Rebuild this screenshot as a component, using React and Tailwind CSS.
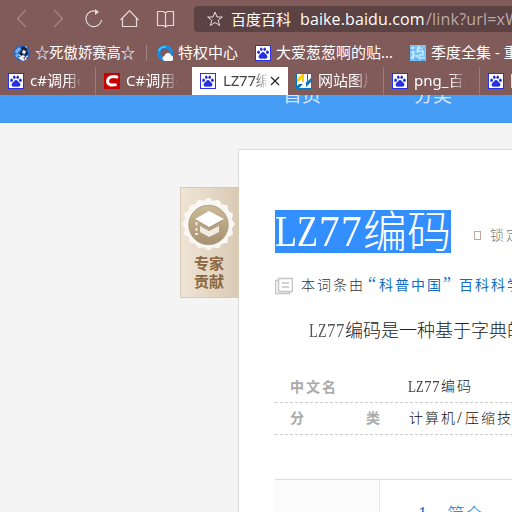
import React from "react";

const PawIcon = () => (
  <svg className="block size-4 shrink-0" viewBox="0 0 16 16">
    <rect x="0.5" y="0.5" width="15" height="15" fill="#fff" stroke="#2932e1" />
    <g fill="#2932e1">
      <ellipse cx="3.600" cy="7.200" rx="1.400" ry="1.700" />
      <ellipse cx="6.300" cy="4.200" rx="1.300" ry="1.800" />
      <ellipse cx="9.700" cy="4.200" rx="1.300" ry="1.800" />
      <ellipse cx="12.400" cy="7.200" rx="1.400" ry="1.700" />
      <path d="M8 7c-1.500 0-2 1.600-3.200 2.600-2.200 1.800-1.200 4.200.8 4.200.9 0 1.500-.4 2.400-.4s1.500.4 2.400.4c2 0 3-2.400.8-4.200C10 8.600 9.500 7 8 7z" />
    </g>
  </svg>
);

const CIcon = () => (
  <svg className="block size-4 shrink-0" viewBox="0 0 16 16">
    <path fill="#c90000" d="M0 0h16v16H0z" />
    <path d="M14 4.400C9 2.700 4 3.600 3.600 8c-.3 4.200 4.200 4.600 9 3.600" fill="none" stroke="#fff" strokeWidth="3" />
  </svg>
);

const SiteIcon = () => (
  <svg className="block size-4 shrink-0" viewBox="0 0 16 16">
    <rect x="0.500" y="0.500" width="15" height="15" fill="#fff" stroke="#0878bd" />
    <path fill="#fc0" d="M1 6l5-5h2v8H6V5L1 10z" />
    <path fill="#0878bd" d="M11 1h1v7l3-3v4l-5 5V9h1zM1 13l2-2h4l-4 4H1z" />
  </svg>
);

const AvatarIcon = () => (
  <svg className="block size-4 shrink-0" viewBox="0 0 16 16">
    <circle cx="8" cy="8" r="8" fill="#2368c4" />
    <path fill="#79b8f4" d="M1 6l4-4 2 2-5 5zM1 10l5-2-3 5z" />
    <path fill="#18213e" d="M7 3c2-3 6-1 6 2l1 4-3 2-1-3-3 4-2-3 3-4z" />
    <path fill="#f8f5f5" d="M9 5l3 1-1 3-3-1zM4 13l5-3 4 4-4 2zM11 1l2 1-1 1z" />
    <path stroke="#fff" d="M5 10l2 1M12 12l2-1" />
    <path fill="#a63c50" d="M9 13l2-1v3z" />
  </svg>
);

const CloudIcon = () => (
  <svg className="block size-4 shrink-0" viewBox="0 0 16 16">
    <circle cx="8" cy="8" r="6.300" fill="none" stroke="#168be8" strokeWidth="3.400" />
    <path d="M2 6a6.300 6.300 0 0 1 7-4" fill="none" stroke="#38c6f5" strokeWidth="2" />
    <path fill="#fff" d="M8 16a2.700 2.700 0 0 1-.5-5.300 3.500 3.500 0 0 1 6.700-.3C17 11 17 16 14 16z" />
  </svg>
);

const ReelIcon = () => (
  <svg className="block size-4 shrink-0" viewBox="0 0 16 16">
    <path fill="#79c4fa" d="M0 0h16v16H0z" />
    <path d="M1 3h3M1 7h4M3 2v12M1 13l4-3M7 3h7M9 1L7 7M8 6h5v4H9v3h6M6 12l2-5" fill="none" stroke="#d9f4ff" strokeWidth="1.200" />
    <path d="M0 5h5M6 9h3M12 2l3 3M11 15h4M5 14l3 1" fill="none" stroke="#4f9fe0" />
  </svg>
);

function NavIcons() {
  return (
    <svg className="block h-[38px] w-[194px] shrink-0" viewBox="0 0 194 38" fill="none" stroke="#e4dada" strokeWidth="1.200">
      <path d="M26 10l-8.500 8.500L26 27M54 10l8.500 8.500L54 27" stroke="#a58989" />
      <path d="M97 11.500A7.900 7.900 0 1 0 101.600 20" />
      <path d="M95 9l4 3-4 3z" fill="#e4dada" stroke="none" />
      <path d="M120.500 20l9-9.500 9 9.500M122.500 18v8.500h14V18" />
      <path d="M165.500 12.500v14M157.500 11.500h6l2 1.500 2-1.500h6v14h-6l-2 1.500-2-1.500h-6z" />
    </svg>
  );
}

function ExpertBadge() {
  const teeth = Array.from({ length: 32 }, (_, i) => {
    const r = i % 2 ? 23.800 : 26.600;
    const a = (i * Math.PI) / 16;
    return `${28.500 + r * Math.sin(a)},${37 - r * Math.cos(a)}`;
  }).join(" ");
  return (
    <div className="mt-16 flex h-[111px] w-[59px] flex-col items-start border border-r-0 border-[#d9c9b2] bg-linear-to-r from-[#efe5d6] to-[#d9cab4]">
      <svg className="-mt-px -ml-px block h-[67px] w-[57px] shrink-0" viewBox="0 0 57 67">
        <defs>
          <linearGradient id="medal" x2="0" y2="1">
            <stop stopColor="#cdbb98" />
            <stop offset="1" stopColor="#a59070" />
          </linearGradient>
        </defs>
        <polygon points={teeth} fill="#f9f7f4" />
        <circle cx="28.500" cy="38" r="19.700" fill="url(#medal)" stroke="#b3a187" />
        <path d="M20 39v6l9 5 10-5v-6l-10 5z" fill="#f1ece5" />
        <path d="M15 32l14-8 15 8-15 8z" fill="#fff" />
        <path d="M16.500 35v3.500M16.500 41v3M15 47h3" fill="none" stroke="#eee6db" strokeWidth="2" />
        <path d="M15.500 33l13.500 8 14-8" fill="none" stroke="#aa967c" />
      </svg>
      <div className="ml-[13px] text-[15px] leading-[18px] font-bold text-[#8b6841]">
        <div>专家</div>
        <div>贡献</div>
      </div>
    </div>
  );
}

const Sep = ({ className = "" }) => <div className={`w-px bg-[#a08282] ${className}`} />;

function Tab({ icon, label, active, divider }) {
  return (
    <div className={`flex h-7 w-24 shrink-0 items-center pl-2 ${active ? "bg-white text-[#444]" : "text-white"} ${divider ? "border-r border-[#9b7c7c]" : ""}`}>
      {icon}
      <div className={`-mt-0.5 shrink-0 overflow-hidden text-[15px] whitespace-nowrap [mask-image:linear-gradient(to_right,#000_70%,transparent)] ${active ? "ml-[7px] w-[45px] tracking-[-0.2px]" : "ml-[6px] w-[52px]"}`}>{label}</div>
      {active && (
        <svg className="ml-[2px] block size-[10px]" viewBox="0 0 10 10" stroke="#222" strokeWidth="1.200">
          <path d="M1 1l8 8M9 1L1 9" />
        </svg>
      )}
    </div>
  );
}

// Half-width serif capitals: every glyph takes half an em.
const Code = () => (
  <span className="inline-flex font-['Liberation_Serif',serif] tracking-normal">
    <span className="inline-block w-[0.5em] origin-left scale-x-[0.82]">L</span>
    <span className="inline-block w-[0.5em] origin-left scale-x-[0.78]">Z</span>
    <span className="inline-block w-[0.5em] origin-left scale-x-[0.94]">7</span>
    <span className="inline-block w-[0.5em] origin-left scale-x-[0.94]">7</span>
  </span>
);

export default function App() {
  return (
    <div className="flex h-[512px] w-[512px] flex-col overflow-hidden bg-[#f4f4f4] font-['Noto_Sans','Noto_Sans_CJK_SC',sans-serif]">
      <header className="h-[95px] shrink-0 overflow-hidden bg-[#815a5a] text-[15px] whitespace-nowrap text-white">
        <div className="flex h-[38px] items-center">
          <NavIcons />
          <div className="flex h-[26px] w-[318px] shrink-0 items-center overflow-hidden rounded-l bg-[#5c4242] pl-[13px]">
            <svg className="block size-4 shrink-0" viewBox="0 0 16 16" fill="none" stroke="#e8dcdc">
              <path d="M8 1l2 5h5.300l-4.200 3.400 1.600 5.200L8 11.500l-4.700 3.100 1.600-5.200L.7 6H6z" />
            </svg>
            <span className="ml-2 w-[69px] shrink-0">百度百科</span>
            <span className="w-[126px] shrink-0 font-['Open_Sans',sans-serif] text-[16px] tracking-[0.12px]">baike.baidu.com</span>
            <span className="font-['Open_Sans',sans-serif] text-[16px] tracking-[0.2px] text-[#bca9a9]">/link?url=xW</span>
          </div>
        </div>
        <div className="flex h-[29px] items-center pl-[14px]">
          <AvatarIcon />
          <span className="ml-[5px] w-[111px] shrink-0 text-[14.300px]">☆死傲娇赛高☆</span>
          <Sep className="h-4 shrink-0" />
          <div className="ml-[10px] shrink-0"><CloudIcon /></div>
          <span className="ml-[5px] w-[77px] shrink-0">特权中心</span>
          <PawIcon />
          <span className="ml-[5px] w-[134px] shrink-0">大爱葱葱啊的贴...</span>
          <ReelIcon />
          <span className="ml-[5px]">季度全集 - 重</span>
        </div>
        <div className="flex h-7">
          <Tab icon={<PawIcon />} label="c#调用c" divider />
          <Tab icon={<CIcon />} label="C#调用c" />
          <Tab icon={<PawIcon />} label="LZ77编码" active />
          <Tab icon={<SiteIcon />} label="网站图片" divider />
          <Tab icon={<PawIcon />} label="png_百度" divider />
          <Tab icon={<PawIcon />} label="图片" />
        </div>
      </header>

      <nav className="flex h-7 shrink-0 overflow-hidden border-b border-[#3d92ec] bg-[#459df5] pl-[283px] text-[19px] leading-[20px] text-[#d1e6fd]">
        <span className="-mt-[10px] w-[131px]">首页</span>
        <span className="-mt-[10px]">分类</span>
      </nav>

      <main className="flex flex-1 pl-[180px]">
        <aside className="relative z-10 w-[58px] shrink-0">
          <ExpertBadge />
        </aside>
        <article className="mt-[26px] w-[280px] shrink-0 border-t border-l border-[#dedede] bg-white pl-9 whitespace-nowrap">
          <div className="mt-[60px] flex h-[43px] items-center">
            <h1 className="flex h-[43px] w-[176px] shrink-0 items-center bg-[#338fff] text-[44px] leading-[43px] font-light text-white">
              <Code /><span>编码</span>
            </h1>
            <span className="mt-2 ml-[23px] h-[9px] w-[7px] shrink-0 border border-[#c5a5a0]" />
            <span className="mt-1.5 ml-[9px] text-[14px] font-light tracking-[2px] text-[#777]">锁定</span>
          </div>

          <div className="mt-[22px] flex h-5 items-center text-[14px] font-light tracking-[2px] text-[#333]">
            <svg className="mt-0.5 block h-[18px] w-[18px] shrink-0" viewBox="0 0 18 18" fill="none" stroke="#c4c4c4">
              <path d="M3.500 1.500h14v13h-14zM3.500 3.500h-3v13h14v-2M7 6h7M7 10h7" strokeWidth="1.500" />
            </svg>
            <span className="-mt-0.5 ml-[8px] w-[62px] shrink-0">本词条由</span>
            <span className="-mt-0.5 flex font-['Noto_Sans_CJK_SC',sans-serif] font-normal text-[#136ec2]">
              <span className="w-4 shrink-0 pl-[5px] font-['Liberation_Serif',serif] text-[18px] leading-5 tracking-normal">“</span>
              <span>科普中国</span>
              <span className="w-4 shrink-0 font-['Liberation_Serif',serif] text-[18px] leading-5">”</span>
              <span>百科科学</span>
            </span>
          </div>

          <p className="mt-[23px] pl-[34px] text-[18px] leading-6 font-light text-[#222]">
            <span className="text-[#555]"><Code /></span>编码是一种基于字典的
          </p>

          <dl className="mt-7 text-[14px] tracking-[2px]">
            <div className="flex h-[32px] items-center border-b border-dashed border-[#ccc] pl-[15px]">
              <dt className="w-[118px] shrink-0 font-bold text-[#aaa]">中文名</dt>
              <dd className="flex items-center text-[#111]">
                <span className="text-[16px] leading-5 text-[#444]"><Code /></span>
                <span className="-mt-0.5 ml-px font-light">编码</span>
              </dd>
            </div>
            <div className="flex h-[32px] items-center border-b border-dashed border-[#ccc] pl-[15px]">
              <dt className="-mt-0.5 flex w-[118px] shrink-0 justify-between pr-[26px] font-bold text-[#aaa]"><span>分</span><span>类</span></dt>
              <dd className="-mt-0.5 flex pl-px font-light text-[#111]"><span>计算机</span><span className="w-2 shrink-0">/</span><span>压缩技术</span></dd>
            </div>
          </dl>

          <section className="mt-11 flex h-[33px] overflow-hidden border-t border-[#ddd]">
            <div className="w-[105px] shrink-0 border-r border-[#e6e6e6] bg-[#fbfbfb]" />
            <div className="flex pt-[22px] pl-[38px] text-[18px] leading-6 font-light text-[#136ec2]">
              <span className="w-[29px] font-['Liberation_Serif',serif]">1</span>
              <span>简介</span>
            </div>
          </section>
        </article>
      </main>
    </div>
  );
}
